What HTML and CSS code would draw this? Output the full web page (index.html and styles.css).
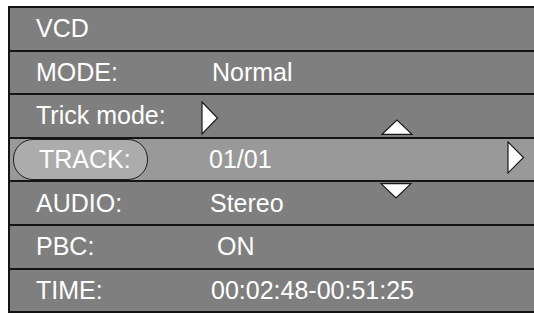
FILE: index.html
```html
<!DOCTYPE html>
<html>
<head>
<meta charset="utf-8">
<link rel="stylesheet" href="styles.css">
</head>
<body>
<div class="panel">
  <div class="row"><span class="label">VCD</span></div>
  <div class="row"><span class="label">MODE:</span><span class="value v-normal">Normal</span></div>
  <div class="row"><span class="label">Trick mode:</span>
    <svg class="trick-arrow" width="18" height="34" viewBox="0 0 18 34"><polygon points="1,1 16.5,17 1,33" fill="#fff" stroke="#1a1a1a" stroke-width="1.2"/></svg>
  </div>
  <div class="row row-active">
    <span class="pill">TRACK:</span><span class="value v-track">01/01</span>
    <svg class="next-arrow" width="18" height="33" viewBox="0 0 18 33"><polygon points="1,1 16.5,16.5 1,32" fill="#fff" stroke="#1a1a1a" stroke-width="1.2"/></svg>
  </div>
  <div class="row"><span class="label">AUDIO:</span><span class="value">Stereo</span></div>
  <div class="row"><span class="label">PBC:</span><span class="value v-on">ON</span></div>
  <div class="row"><span class="label">TIME:</span><span class="value v-time">00:02:48-00:51:25</span></div>

  <svg class="arrow-up" width="32" height="16" viewBox="0 0 32 16"><polygon points="1,15.3 16,1 31,15.3" fill="#fff" stroke="#1a1a1a" stroke-width="1.2"/></svg>
  <svg class="arrow-down" width="32" height="16" viewBox="0 0 32 16"><polygon points="1,0.7 31,0.7 16,15" fill="#fff" stroke="#1a1a1a" stroke-width="1.2"/></svg>
</div>
</body>
</html>
```

FILE: styles.css
```css
html, body {
  margin: 0;
  padding: 0;
  background: #ffffff;
  overflow: hidden;
}

body {
  width: 534px;
  height: 314px;
  font-family: "Liberation Sans", Arial, sans-serif;
}

.panel {
  position: relative;
  box-sizing: border-box;
  margin: 6px 0 0 8px;
  width: 526px;
  border: 2px solid #141414;
  border-right: none;
  background: #7f7f7f;
}

.row {
  display: flex;
  align-items: center;
  height: 41.6px;
  border-top: 2px solid #141414;
  color: #ffffff;
  font-size: 25px;
  background: #7f7f7f;
}

.row:first-child {
  border-top: none;
}

.label {
  width: 174px;
  padding-left: 26px;
  line-height: 1;
}

.value {
  line-height: 1;
}

.v-normal { padding-left: 2px; }
.v-on { padding-left: 7px; }
.v-time { padding-left: 1px; }

.trick-arrow {
  display: block;
  margin-left: -9px;
  margin-top: 4px;
}

.row-active {
  background: #999999;
}

.pill {
  box-sizing: border-box;
  display: flex;
  align-items: center;
  width: 135px;
  height: 41px;
  margin-left: 3px;
  margin-right: 62px;
  padding-left: 25px;
  border: 1.5px solid #1e1e1e;
  border-radius: 20px;
  background: #acacac;
  line-height: 1;
}

.v-track {
  width: 298px;
  margin-left: -1px;
}

.next-arrow {
  display: block;
  margin-top: -4px;
}

.arrow-up {
  position: absolute;
  left: 371px;
  top: 111px;
}

.arrow-down {
  position: absolute;
  left: 370px;
  top: 175px;
}
```
